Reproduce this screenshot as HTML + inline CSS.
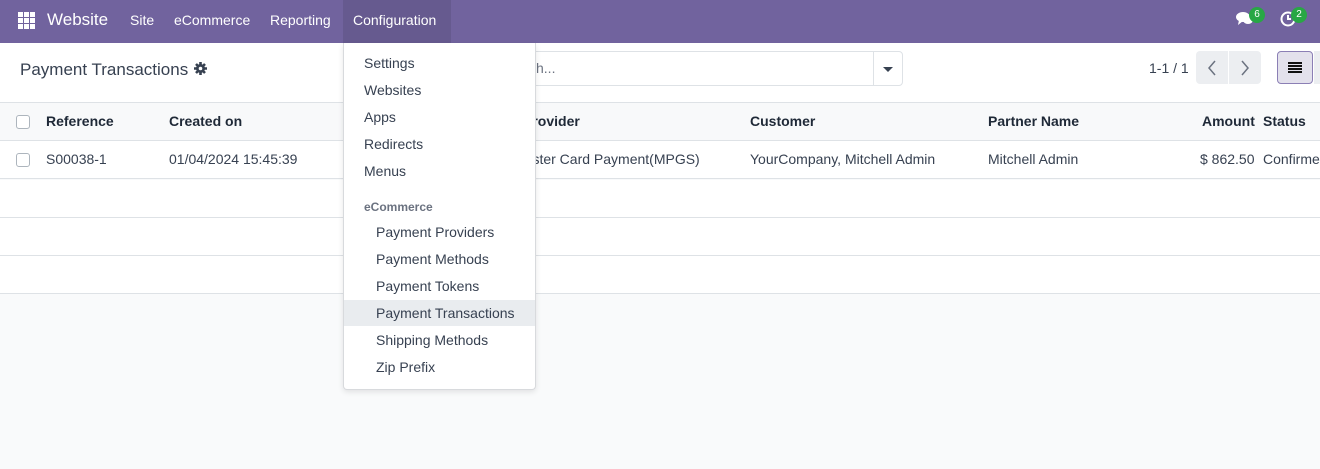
<!DOCTYPE html>
<html><head><style>
*{box-sizing:border-box;margin:0;padding:0}
body{width:1320px;height:469px;overflow:hidden;background:#f9fafb;font-family:"Liberation Sans","DejaVu Sans",sans-serif;font-size:14px;color:#374151;position:relative}
.nav{position:absolute;left:0;top:0;width:1320px;height:43px;background:#71639e;color:#fff}
.nav span{position:absolute;top:12px;font-size:14px}
.ctrl{position:absolute;top:43px;left:0;width:1320px;height:59px;background:#fff}
.row{position:absolute;left:0;width:1320px;height:38px;border-bottom:1px solid #dee2e6;background:#fff}
.row span{position:absolute;top:10px}
.hdr span{font-weight:bold;color:#1f2937}
.cb{position:absolute;left:16px;top:12px;width:14px;height:14px;border:1px solid #adb5bd;border-radius:3px;background:#fff}
.menu{position:absolute;left:343px;top:43px;width:193px;height:347px;background:#fff;border:1px solid #d8dadd;border-top:none;border-radius:0 0 4px 4px;box-shadow:0 2px 6px rgba(0,0,0,.1)}
.menu div{position:absolute;left:0;width:191px;height:26px;line-height:26px;color:#374151}
.badge{position:absolute;background:#28a745;color:#fff;font-size:10px;border-radius:8px;width:16px;height:16px;line-height:16px;text-align:center}
</style></head><body>
<div class="nav">
<svg style="position:absolute;left:18px;top:12px" width="17" height="17" viewBox="0 0 17 17" fill="#fff"><rect x="0" y="0" width="5" height="5"/><rect x="6" y="0" width="5" height="5"/><rect x="12" y="0" width="5" height="5"/><rect x="0" y="6" width="5" height="5"/><rect x="6" y="6" width="5" height="5"/><rect x="12" y="6" width="5" height="5"/><rect x="0" y="12" width="5" height="5"/><rect x="6" y="12" width="5" height="5"/><rect x="12" y="12" width="5" height="5"/></svg>
<span style="left:47px;top:10px;font-size:17px">Website</span>
<span style="left:130px">Site</span>
<span style="left:174px">eCommerce</span>
<span style="left:270px">Reporting</span>
<div style="position:absolute;left:343px;top:0;width:108px;height:43px;background:#665a8f"></div>
<span style="left:353px">Configuration</span>
<svg style="position:absolute;left:1236px;top:11px" width="18" height="16" viewBox="0 0 18 16" fill="#fff"><ellipse cx="7" cy="6" rx="7" ry="5"/><path d="M3 9 L2 14 L7 10Z"/><ellipse cx="12" cy="9" rx="5" ry="4"/></svg>
<div class="badge" style="left:1249px;top:7px">6</div>
<svg style="position:absolute;left:1280px;top:11px" width="16" height="16" viewBox="0 0 16 16"><circle cx="8" cy="8" r="6.5" fill="none" stroke="#fff" stroke-width="2"/><path d="M8 4v4h3" stroke="#fff" stroke-width="2" fill="none"/></svg>
<div class="badge" style="left:1291px;top:7px">2</div>
</div>
<div class="ctrl">
<span style="position:absolute;left:20px;top:17px;font-size:17px;color:#374151">Payment Transactions</span>
<svg style="position:absolute;left:194px;top:19px" width="13" height="13" viewBox="0 0 13 13"><circle cx="6.5" cy="6.5" r="4.5" fill="#374151"/><g stroke="#374151" stroke-width="2.6"><path d="M6.5 0v13M0 6.5h13M2 2l9 9M11 2l-9 9"/></g><circle cx="6.5" cy="6.5" r="1.8" fill="#fff"/></svg>
<div style="position:absolute;left:500px;top:8px;width:403px;height:35px;border:1px solid #dee2e6;border-radius:4px"></div>
<span style="position:absolute;left:536px;top:17px;color:#6b7280">h...</span>
<div style="position:absolute;left:873px;top:9px;width:1px;height:33px;background:#dee2e6"></div>
<div style="position:absolute;left:883px;top:24px;border:5px solid transparent;border-top:5px solid #374151;border-bottom:none"></div>
<span style="position:absolute;left:1149px;top:17px">1-1 / 1</span>
<div style="position:absolute;left:1196px;top:8px;width:65px;height:33px;background:#eceef1;border-radius:4px"></div>
<div style="position:absolute;left:1228px;top:8px;width:1px;height:33px;background:#fff"></div>
<svg style="position:absolute;left:1207px;top:17px" width="10" height="16"><path d="M8 1L2 8l6 7" stroke="#6b7280" stroke-width="1.5" fill="none"/></svg>
<svg style="position:absolute;left:1240px;top:17px" width="10" height="16"><path d="M2 1l6 7-6 7" stroke="#6b7280" stroke-width="1.5" fill="none"/></svg>
<div style="position:absolute;left:1277px;top:8px;width:36px;height:33px;background:#e3e1ec;border:1px solid #8b7fb5;border-radius:4px"></div>
<svg style="position:absolute;left:1288px;top:19px" width="14" height="11"><rect y="0" width="14" height="2" fill="#111"/><rect y="3" width="14" height="2" fill="#111"/><rect y="6" width="14" height="2" fill="#111"/><rect y="9" width="14" height="2" fill="#111"/></svg>
<div style="position:absolute;left:1314px;top:8px;width:6px;height:33px;background:#eceef1"></div>
</div>
<div class="row hdr" style="top:102px;background:#f8f9fa;border-top:1px solid #dee2e6;height:39px">
<div class="cb"></div>
<span style="left:46px">Reference</span><span style="left:169px">Created on</span><span style="left:523px">Provider</span><span style="left:750px">Customer</span><span style="left:988px">Partner Name</span><span style="left:1202px">Amount</span><span style="left:1263px">Status</span>
</div>
<div class="row" style="top:141px">
<div class="cb"></div>
<span style="left:46px">S00038-1</span><span style="left:169px">01/04/2024 15:45:39</span><span style="left:513px">Master Card Payment(MPGS)</span><span style="left:750px">YourCompany, Mitchell Admin</span><span style="left:988px">Mitchell Admin</span><span style="left:1200px">$ 862.50</span><span style="left:1263px">Confirmed</span>
</div>
<div class="row" style="top:180px"></div>
<div class="row" style="top:218px"></div>
<div class="row" style="top:256px"></div>
<div class="menu">
<div style="top:7px;padding-left:20px">Settings</div>
<div style="top:34px;padding-left:20px">Websites</div>
<div style="top:61px;padding-left:20px">Apps</div>
<div style="top:88px;padding-left:20px">Redirects</div>
<div style="top:115px;padding-left:20px">Menus</div>
<div style="top:154px;padding-left:20px;font-size:12px;font-weight:bold;color:#6b7280;height:20px;line-height:20px">eCommerce</div>
<div style="top:176px;padding-left:32px">Payment Providers</div>
<div style="top:203px;padding-left:32px">Payment Methods</div>
<div style="top:230px;padding-left:32px">Payment Tokens</div>
<div style="top:257px;padding-left:32px;background:#e9ecef">Payment Transactions</div>
<div style="top:284px;padding-left:32px">Shipping Methods</div>
<div style="top:311px;padding-left:32px">Zip Prefix</div>
</div>
</body></html>
